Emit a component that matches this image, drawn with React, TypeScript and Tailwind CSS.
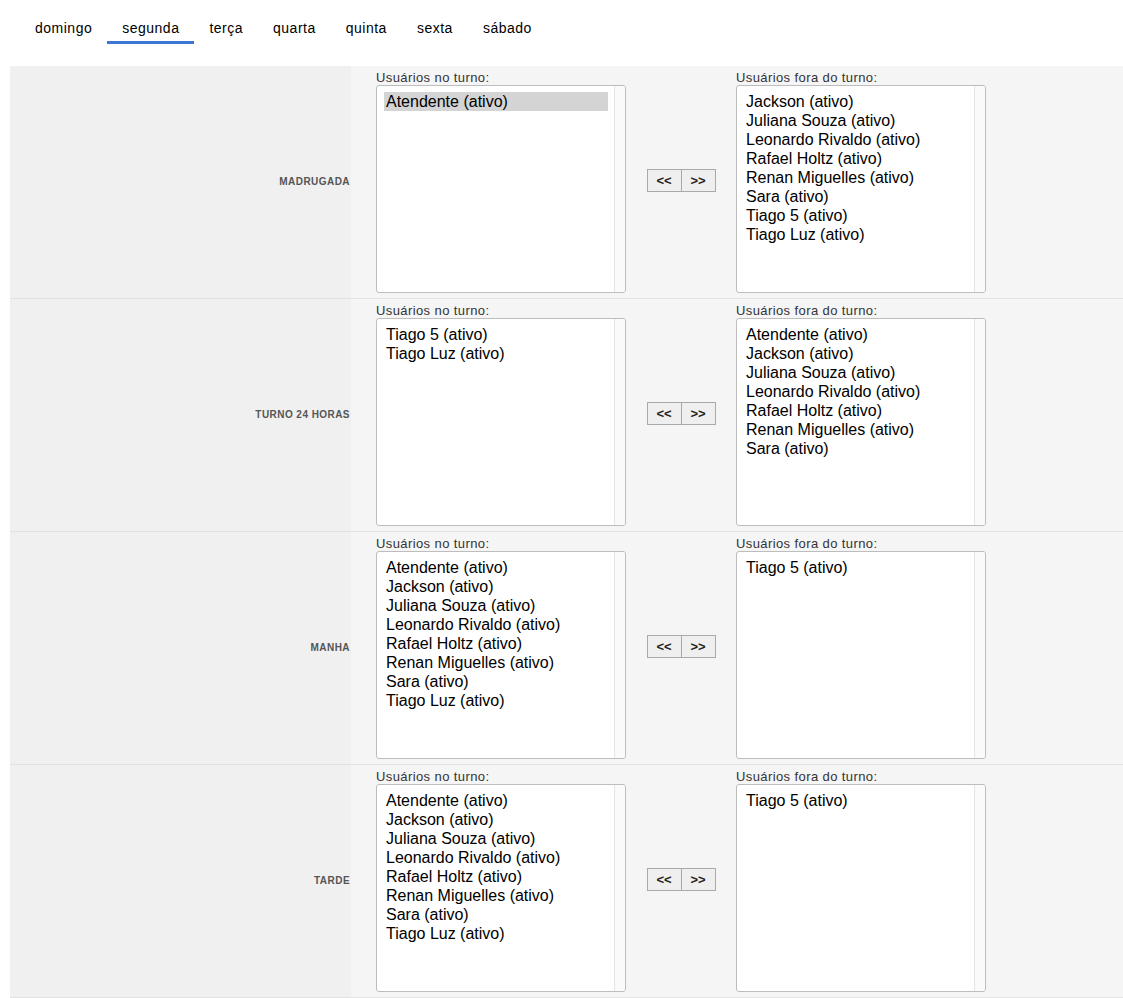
import React from 'react';

const days = ['domingo', 'segunda', 'terça', 'quarta', 'quinta', 'sexta', 'sábado'];

type Shift = {
  name: string;
  inShift: string[];
  outShift: string[];
  selected?: string;
};

const shifts: Shift[] = [
  {
    name: 'MADRUGADA',
    inShift: ['Atendente (ativo)'],
    outShift: [
      'Jackson (ativo)',
      'Juliana Souza (ativo)',
      'Leonardo Rivaldo (ativo)',
      'Rafael Holtz (ativo)',
      'Renan Miguelles (ativo)',
      'Sara (ativo)',
      'Tiago 5 (ativo)',
      'Tiago Luz (ativo)',
    ],
    selected: 'Atendente (ativo)',
  },
  {
    name: 'TURNO 24 HORAS',
    inShift: ['Tiago 5 (ativo)', 'Tiago Luz (ativo)'],
    outShift: [
      'Atendente (ativo)',
      'Jackson (ativo)',
      'Juliana Souza (ativo)',
      'Leonardo Rivaldo (ativo)',
      'Rafael Holtz (ativo)',
      'Renan Miguelles (ativo)',
      'Sara (ativo)',
    ],
  },
  {
    name: 'MANHA',
    inShift: [
      'Atendente (ativo)',
      'Jackson (ativo)',
      'Juliana Souza (ativo)',
      'Leonardo Rivaldo (ativo)',
      'Rafael Holtz (ativo)',
      'Renan Miguelles (ativo)',
      'Sara (ativo)',
      'Tiago Luz (ativo)',
    ],
    outShift: ['Tiago 5 (ativo)'],
  },
  {
    name: 'TARDE',
    inShift: [
      'Atendente (ativo)',
      'Jackson (ativo)',
      'Juliana Souza (ativo)',
      'Leonardo Rivaldo (ativo)',
      'Rafael Holtz (ativo)',
      'Renan Miguelles (ativo)',
      'Sara (ativo)',
      'Tiago Luz (ativo)',
    ],
    outShift: ['Tiago 5 (ativo)'],
  },
];

function ListBox({ title, items, selected }: { title: string; items: string[]; selected?: string }) {
  return (
    <div className="flex flex-col w-[250px]">
      <div className="text-[13px] leading-[14px] tracking-[0.4px] text-[#333] whitespace-nowrap">{title}</div>
      <div className="h-[208px] flex bg-white border border-[#bdbdbd] rounded-[3px] overflow-hidden">
        <div className="flex-1 pt-[6px] pl-[7px] pr-[6px]">
          {items.map((item) => (
            <div
              key={item}
              className={
                'text-[16px] leading-[19px] pl-[2px] text-black whitespace-nowrap ' +
                (item === selected ? 'bg-[#d4d4d4]' : '')
              }
            >
              {item}
            </div>
          ))}
        </div>
        <div className="w-[11px] bg-[#fafafa] border-l border-[#e6e6e6]" />
      </div>
    </div>
  );
}

function ShiftRow({ shift }: { shift: Shift }) {
  return (
    <div className="flex h-[233px] border-b border-[#e2e2e2]">
      <div className="w-[341px] bg-[#f0f0f0] flex items-center justify-end pr-[1px] pb-[2px]">
        <span className="text-[10px] font-bold tracking-[0.45px] text-[#555]">{shift.name}</span>
      </div>
      <div className="flex-1 bg-[#f5f5f5] flex pt-[5px] pl-[25px]">
        <ListBox title="Usuários no turno:" items={shift.inShift} selected={shift.selected} />
        <div className="w-[110px] flex items-center justify-center pb-[9px]">
          <div className="flex">
            <button className="w-[35px] h-[23px] border border-[#a9a9a9] bg-[#efefef] text-[13px] font-bold text-[#222] leading-none">
              {'<<'}
            </button>
            <button className="w-[34px] h-[23px] border border-l-0 border-[#a9a9a9] bg-[#efefef] text-[13px] font-bold text-[#222] leading-none">
              {'>>'}
            </button>
          </div>
        </div>
        <ListBox title="Usuários fora do turno:" items={shift.outShift} />
      </div>
    </div>
  );
}

export default function App() {
  return (
    <div className="min-h-screen bg-white font-['Liberation_Sans',Arial,sans-serif]">
      <nav className="flex pl-[20px] pt-[20px] h-[66px]">
        {days.map((day) => (
          <div
            key={day}
            className={
              'px-[15px] h-[24px] text-[14px] leading-[17px] tracking-[0.5px] text-black border-b-[3px] ' +
              (day === 'segunda' ? 'border-[#3e74d6]' : 'border-transparent')
            }
          >
            {day}
          </div>
        ))}
      </nav>
      <div className="ml-[10px]">
        {shifts.map((shift) => (
          <ShiftRow key={shift.name} shift={shift} />
        ))}
      </div>
    </div>
  );
}
